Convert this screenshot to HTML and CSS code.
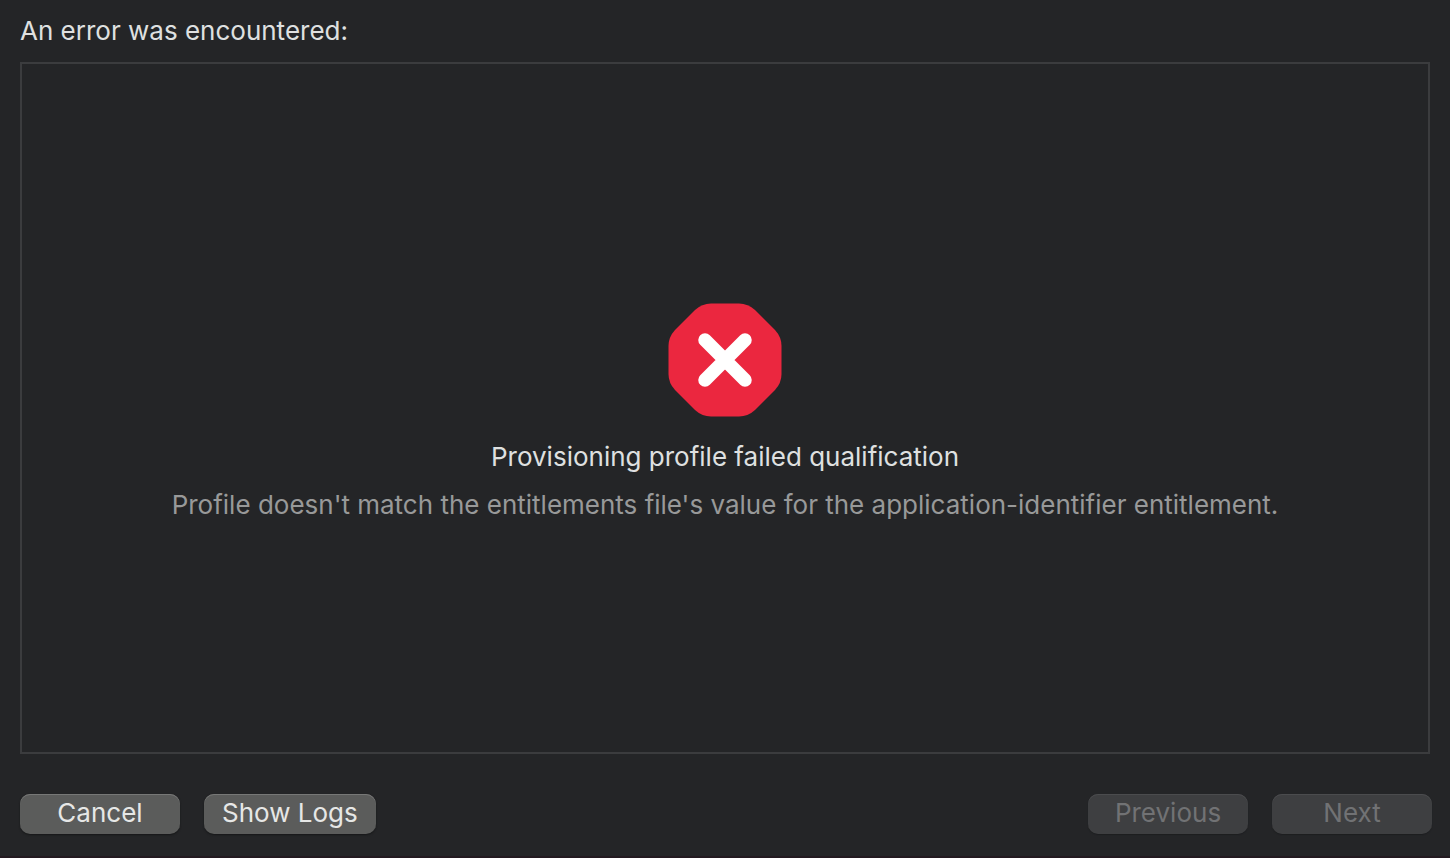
FILE: index.html
```html
<!DOCTYPE html>
<html lang="en">
<head>
    <meta charset="UTF-8">
    <meta name="viewport" content="width=device-width, initial-scale=1.0">
    <title>Provisioning profile failed qualification</title>
    <link rel="stylesheet" href="styles.css">
</head>
<body>
    <h1 class="title">An error was encountered:</h1>

    <main class="panel">
        <svg class="error-icon" viewBox="0 0 114 114" aria-hidden="true">
            <path fill="#eb273f" d="M43 0.5H71Q80 0.5 87 7L107 27Q113.500 34 113.500 43V71Q113.500 80 107 87L87 107Q80 113.500 71 113.500H43Q34 113.500 27 107L7 87Q0.500 80 0.500 71V43Q0.500 34 7 27L27 7Q34 0.500 43 0.500Z"/>
            <path stroke="#fff" stroke-width="13.5" stroke-linecap="round" d="M37 37L77 77M77 37L37 77"/>
        </svg>
        <h2 class="message">Provisioning profile failed qualification</h2>
        <p class="detail">Profile doesn't match the entitlements file's value for the application-identifier entitlement.</p>
    </main>

    <footer class="actions">
        <button type="button" class="btn">Cancel</button>
        <button type="button" class="btn">Show Logs</button>
        <button type="button" class="btn btn-previous" disabled>Previous</button>
        <button type="button" class="btn" disabled>Next</button>
    </footer>
</body>
</html>
```
FILE: styles.css
```css
* {
    box-sizing: border-box;
}

body {
    display: flex;
    flex-direction: column;
    min-height: 100vh;
    margin: 0;
    padding: 15px 20px 22px;
    background-color: #242527;
    border-bottom: 2px solid #231a20;
    color: #dfe0e0;
    font-family: Inter, sans-serif;
    font-size: 26px;
    line-height: 32px;
}

.title {
    margin: 0 0 15px;
    font-size: 26px;
    font-weight: 400;
}

.panel {
    display: flex;
    flex: 1;
    flex-direction: column;
    align-items: center;
    justify-content: center;
    padding-top: 8px;
    border: 2px solid #3b3c3e;
    text-align: center;
}

.error-icon {
    width: 114px;
    height: 114px;
}

.message {
    margin: 24px 0 16px;
    font-size: 26px;
    font-weight: 400;
}

.detail {
    margin: 0;
    color: #989999;
}

.actions {
    display: flex;
    gap: 24px;
    margin: 40px -2px 0 0;
}

.btn {
    min-width: 160px;
    height: 40px;
    padding: 0 18px 2px;
    border: none;
    border-radius: 10px;
    background-color: #5b5c5b;
    box-shadow: inset 0 1px #777877, 0 1px 2px #161718;
    color: #e6e7e6;
    font-family: inherit;
    font-size: 26px;
    line-height: 38px;
}

.btn:disabled {
    background-color: #3e3f41;
    box-shadow: inset 0 1px #4b4c4e, 0 1px 1px #1d1e20;
    color: #717274;
}

.btn-previous {
    margin-left: auto;
}
```
